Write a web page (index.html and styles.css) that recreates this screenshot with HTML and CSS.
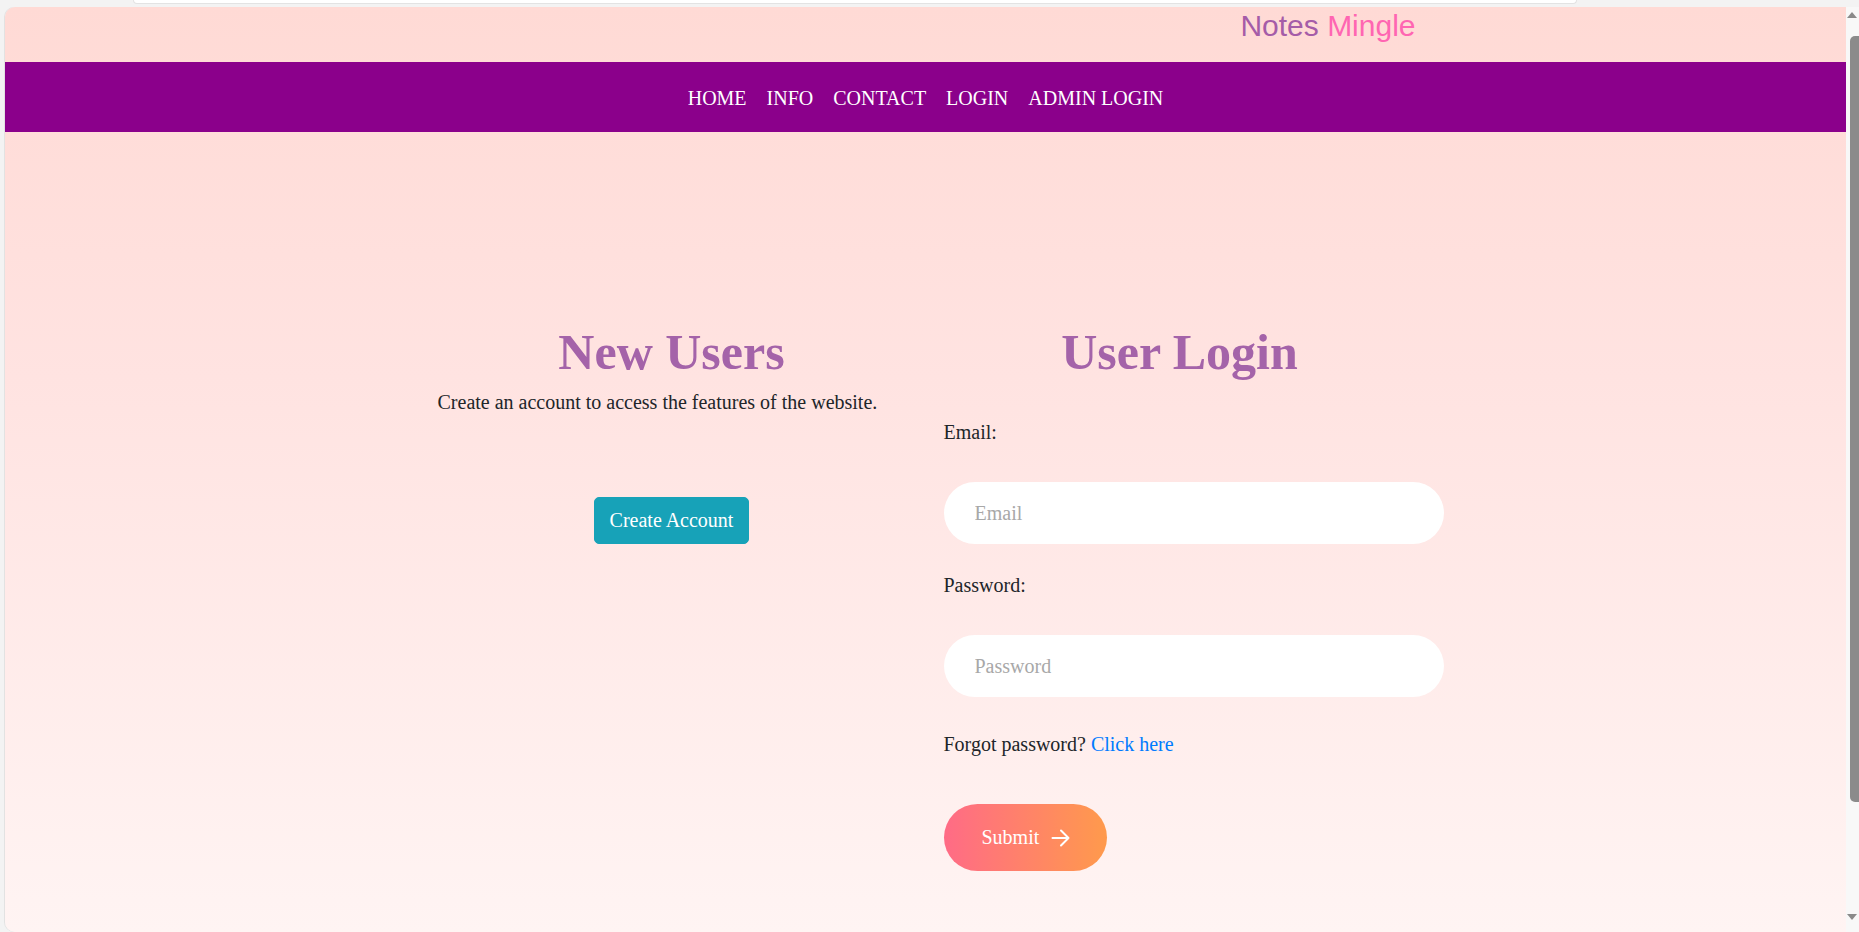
FILE: index.html
```html
<!DOCTYPE html>
<html lang="en">
<head>
<meta charset="utf-8">
<title>Notes Mingle - Login</title>
<link rel="stylesheet" href="styles.css">
</head>
<body>
<div class="chrome-top"><div class="toolbar-edge"></div></div>
<div class="window">
  <div class="page">
    <header class="brand-bar">
      <div class="brand-inner">
        <span class="brand"><span class="notes">Notes</span> <span class="mingle">Mingle</span></span>
      </div>
    </header>
    <nav class="navbar">
      <a href="#">HOME</a>
      <a href="#">INFO</a>
      <a href="#">CONTACT</a>
      <a href="#">LOGIN</a>
      <a href="#">ADMIN LOGIN</a>
    </nav>
    <main class="content">
      <section class="col col-new">
        <h1 class="title">New Users</h1>
        <p class="lead">Create an account to access the features of the website.</p>
        <div class="create-wrap"><button class="btn-create" type="button">Create Account</button></div>
      </section>
      <section class="col col-login">
        <h1 class="title">User Login</h1>
        <form class="login-form">
          <label class="field-label label-email" for="email">Email:</label>
          <input class="field-input" id="email" type="email" placeholder="Email">
          <label class="field-label label-pass" for="pass">Password:</label>
          <input class="field-input" id="pass" type="password" placeholder="Password">
          <p class="forgot">Forgot password? <a href="#" class="link">Click here</a></p>
          <button class="btn-submit" type="button">
            <span>Submit</span>
            <svg class="arrow" width="19" height="18" viewBox="0 0 19 18" aria-hidden="true">
              <path d="M1.5 9 H17.5 M10 1.5 L17.5 9 L10 16.5" fill="none" stroke="#fff" stroke-width="2" stroke-linecap="round" stroke-linejoin="round"/>
            </svg>
          </button>
        </form>
      </section>
    </main>
  </div>
  <div class="scrollbar">
    <span class="sb-arrow sb-up"></span>
    <div class="sb-thumb"></div>
    <span class="sb-arrow sb-down"></span>
  </div>
</div>
</body>
</html>
```
FILE: styles.css
```css
* { box-sizing: border-box; }

html, body {
  margin: 0;
  padding: 0;
  height: 932px;
  overflow: hidden;
}

body {
  background: #f3f3f3;
  font-family: "Liberation Serif", "Times New Roman", serif;
  color: #212529;
}

.chrome-top {
  height: 7px;
  padding-left: 133px;
}

.toolbar-edge {
  width: 1444px;
  height: 4px;
  background: #ffffff;
  border: 1px solid #e3e3e3;
  border-top: none;
  border-radius: 0 0 8px 8px;
}

.window {
  display: flex;
  height: 925px;
  margin-left: 5px;
}

.page {
  flex: 1;
  border-radius: 10px 0 0 10px;
  overflow: hidden;
  background: linear-gradient(to bottom, #ffdad5 0%, #ffe3e1 40%, #fff4f3 100%);
  box-shadow: -1px 0 0 #e2e2e2;
}

.brand-bar {
  height: 55px;
  padding-top: 2px;
}

.brand-inner {
  width: 980px;
  margin: 0 auto;
  text-align: right;
}

.brand {
  font-family: "Liberation Sans", Arial, sans-serif;
  font-size: 30px;
  line-height: 34px;
}

.notes { color: #a55ca8; }
.mingle { color: #ff66b2; }

.navbar {
  height: 70px;
  padding-top: 2px;
  background: #8b008b;
  display: flex;
  align-items: center;
  justify-content: center;
  gap: 20px;
}

.navbar a {
  color: #ffffff;
  text-decoration: none;
  font-size: 20px;
  line-height: 23px;
}

.content {
  display: flex;
  justify-content: center;
  gap: 36px;
  padding-top: 190px;
}

.col {
  width: 472px;
  flex: none;
}

.title {
  margin: 0;
  text-align: center;
  font-size: 50px;
  line-height: 60px;
  font-weight: bold;
  color: #a463a9;
}

.lead {
  margin: 5px 0 0;
  padding-left: 2px;
  font-size: 20px;
  line-height: 30px;
  white-space: nowrap;
}

.create-wrap {
  text-align: center;
  margin-top: 80px;
}

.btn-create {
  font-family: inherit;
  font-size: 20px;
  line-height: 31px;
  padding: 7px 15px;
  color: #ffffff;
  background: #17a2b8;
  border: 1px solid #17a2b8;
  border-radius: 5px;
}

.login-form {
  display: flex;
  flex-direction: column;
  align-items: flex-start;
}

.field-label {
  font-size: 20px;
  line-height: 30px;
}

.label-email { margin-top: 35px; }
.label-pass { margin-top: 26px; }

.field-input {
  width: 500px;
  height: 62px;
  margin-top: 35px;
  padding: 0 31px;
  border: none;
  border-radius: 31px;
  background: #ffffff;
  font-family: inherit;
  font-size: 20px;
  color: #495057;
  outline: none;
}

.field-input::placeholder { color: #a8a8a8; }

.forgot {
  margin: 32px 0 0;
  font-size: 20px;
  line-height: 30px;
}

.link {
  color: #007bff;
  text-decoration: none;
}

.btn-submit {
  margin-top: 45px;
  height: 67px;
  padding: 0 37px 0 38px;
  display: flex;
  align-items: center;
  gap: 12px;
  border: none;
  border-radius: 34px;
  background: linear-gradient(to right, #ff6b86, #ff9a4c);
  color: #ffffff;
  font-family: inherit;
  font-size: 20px;
}

.arrow { display: block; }

.scrollbar {
  width: 13px;
  background: #f8f8f8;
  display: flex;
  flex-direction: column;
  align-items: flex-end;
}

.sb-arrow {
  width: 0;
  height: 0;
  margin-right: 2px;
  border-left: 5px solid transparent;
  border-right: 5px solid transparent;
}

.sb-up {
  margin-top: 5px;
  border-bottom: 6px solid #8a8a8a;
}

.sb-thumb {
  width: 9px;
  height: 766px;
  margin-top: 18px;
  background: #8b8b8b;
  border-radius: 5px 0 0 5px;
}

.sb-down {
  margin-top: 112px;
  border-top: 6px solid #8a8a8a;
}
```
